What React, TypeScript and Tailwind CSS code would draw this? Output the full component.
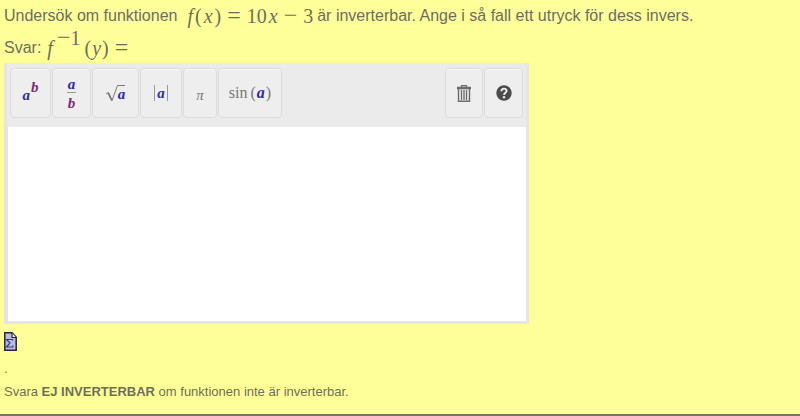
import type { ReactNode } from "react";

const serif = "font-['Liberation_Serif','DejaVu_Serif',serif]";

function Tool({ label, width, children }: { label: string; width: string; children: ReactNode }) {
  return (
    <button
      type="button"
      aria-label={label}
      className={`flex h-[50px] items-center justify-center rounded border border-[#dcdcdc] bg-[#eeeeee] shadow-[inset_0_1px_0_#fafafa] ${width}`}
    >
      {children}
    </button>
  );
}

function A() {
  return <i className="font-bold text-[#2a2ab0]">a</i>;
}

function B() {
  return <i className="font-bold text-[#80287a]">b</i>;
}

function Op({ children }: { children: ReactNode }) {
  return <span className="text-2xl leading-none">{children}</span>;
}

function TrashIcon() {
  return (
    <svg width="14" height="17" viewBox="0 0 14 17" fill="none" stroke="#6c6c6c" aria-hidden="true">
      <path d="M4.5 2V.7h5V2" strokeWidth="1.2" />
      <path d="M0 3h14" strokeWidth="2.6" />
      <path d="M1.5 4v12.2h11V4" strokeWidth="1.4" />
      <path d="M4.5 5v10M7 5v10M9.5 5v10" strokeWidth="1.3" />
    </svg>
  );
}

function HelpIcon() {
  return (
    <svg width="16" height="16" viewBox="0 0 16 16" fill="none" aria-hidden="true">
      <circle cx="8" cy="8" r="7.7" fill="#4b4b4b" />
      <path d="M5.4 6.2C5.4 2.7 10.7 2.8 10.6 6 10.5 7.7 8.1 7.9 8 9.9" stroke="#eee" strokeWidth="1.9" />
      <circle cx="8" cy="12.2" r="1.2" fill="#eee" />
    </svg>
  );
}

function SigmaPage() {
  return (
    <svg width="13" height="19" viewBox="0 0 13 19" fill="none" aria-hidden="true">
      <path d="M.8.8H8l4.2 4.5v12.9H.8Z" fill="#b9bce6" stroke="#25252f" strokeWidth="1.5" />
      <path d="M8 1v4.5h4" fill="#f5f5fc" stroke="#25252f" strokeWidth="1.2" />
      <path d="M8.5 8.5v-1h-6L6 11l-3.5 4h6.3v-1.5" stroke="#3b3b80" strokeWidth="1.2" />
    </svg>
  );
}

export default function App() {
  return (
    <main className="border-b-2 border-[#77775c] bg-[#ffff99] px-1 font-['Liberation_Sans',Arial,sans-serif] text-[#6e6e5e]">
      <p className="flex h-8 items-center text-base whitespace-pre">
        <span>Undersök om funktionen</span>
        <span className={`ml-2.5 mr-1 flex items-baseline gap-1.5 text-xl ${serif}`}>
          <span className="flex gap-0.5"><i>f</i><span>(</span><i>x</i><span>)</span></span>
          <Op>=</Op>
          <span className="flex gap-0.5">10<i>x</i></span>
          <Op>−</Op>
          <span>3</span>
        </span>
        <span>är inverterbar. Ange i så fall ett utryck för dess invers.</span>
      </p>
      <p className="flex h-[31px] items-center text-base">
        <label htmlFor="answer">Svar:</label>
        <span className={`ml-1.5 flex items-baseline text-xl ${serif}`}>
          <i>f</i>
          <sup className="ml-1 flex items-baseline text-xl leading-none"><Op>−</Op><span>1</span></sup>
          <span className="ml-1 flex gap-px"><span>(</span><i>y</i><span>)</span></span>
          <span className="ml-1.5"><Op>=</Op></span>
        </span>
      </p>

      <section className="w-full max-w-[525px] border-3 border-t-0 border-[#e5e5e8] bg-[#ebebeb]">
        <div className={`flex h-16 items-center gap-px px-[3px] pb-1 text-[15px] text-[#777] ${serif}`}>
          <Tool label="a upphöjt till b" width="w-[41px]">
            <span className="mt-1"><A /><sup className="ml-px text-[15px]"><B /></sup></span>
          </Tool>
          <Tool label="Bråk" width="w-[39px]">
            <span className="flex flex-col items-center leading-4">
              <span className="border-b border-[#999] px-px"><A /></span>
              <span className="pt-0.5"><B /></span>
            </span>
          </Tool>
          <Tool label="Kvadratrot" width="w-[47px]">
            <span className="flex items-center">
              <svg width="12" height="17" viewBox="0 0 12 17" fill="none" stroke="#777" aria-hidden="true">
                <path d="M0 9l2.5-1.5L6 15.5 11.5.5H12" />
                <path d="M2.2 8l3.6 7.5" strokeWidth="1.6" />
              </svg>
              <span className="border-t border-[#777] leading-4"><A /></span>
            </span>
          </Tool>
          <Tool label="Absolutbelopp" width="w-[42px]">
            <span className="border-x border-[#999] px-0.5 leading-4"><A /></span>
          </Tool>
          <Tool label="Pi" width="w-[34px]">
            <i className="mt-1">π</i>
          </Tool>
          <Tool label="Sinus" width="w-[64px]">
            <span className="flex gap-[3px] text-base">
              <span>sin</span>
              <span className="flex gap-px">(<A />)</span>
            </span>
          </Tool>
          <span className="flex-1" />
          <Tool label="Rensa" width="w-[38px]"><TrashIcon /></Tool>
          <Tool label="Hjälp" width="w-[39px]"><HelpIcon /></Tool>
        </div>
        <textarea id="answer" className="block h-[194px] w-full resize-none border-l border-[#e5e5e8] bg-white p-2 outline-none" />
      </section>

      <div className="flex h-[35px] items-center">
        <button type="button" aria-label="Förhandsgranska formel"><SigmaPage /></button>
      </div>
      <p className="h-[21px] text-[13px] leading-5">.</p>
      <p className="h-[34px] pt-0.5 text-[13px] leading-5">
        Svara <strong>EJ INVERTERBAR</strong> om funktionen inte är inverterbar.
      </p>
    </main>
  );
}
